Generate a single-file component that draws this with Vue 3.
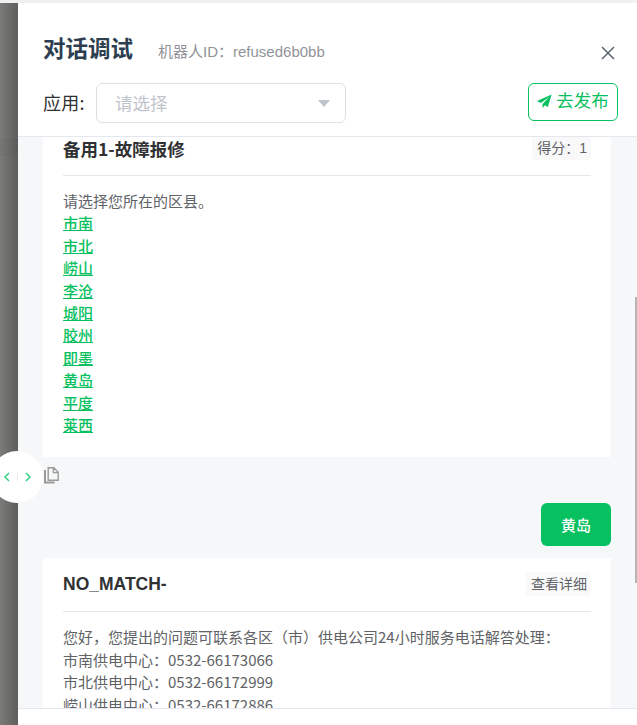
<script setup>
const districts = ['市南', '市北', '崂山', '李沧', '城阳', '胶州', '即墨', '黄岛', '平度', '莱西']
const phones = [
  ['市南', '66173066'],
  ['市北', '66172999'],
  ['崂山', '66172886']
]
</script>

<template>
  <div class="page">
    <div class="handle">
      <svg class="chev" viewBox="0 0 6 10" width="6" height="10"><path d="M5 1 1 5l4 4" /></svg>
      <span class="handle-sep"></span>
      <svg class="chev" viewBox="0 0 6 10" width="6" height="10"><path d="M1 1l4 4-4 4" /></svg>
    </div>
    <section class="drawer">
      <header class="head">
        <div class="title-row">
          <h1 class="title">对话调试</h1>
          <span class="robot">机器人ID：refused6b0bb</span>
          <svg class="close" viewBox="0 0 14 14" width="14" height="14"><path d="M1 1l12 12M13 1 1 13" /></svg>
        </div>
        <div class="app-row">
          <span class="app-label">应用:</span>
          <div class="select">
            <span>请选择</span>
            <i class="caret"></i>
          </div>
          <button class="publish">
            <svg viewBox="0 0 16 16" width="15" height="15"><path d="M15.6.4 0 7.4l4 2.1L13 3.2 5.9 10.6V15l2.5-3 3.2 1.8z" /></svg>
            去发布
          </button>
        </div>
      </header>
      <div class="scroll">
        <div class="list">
          <article class="card">
            <div class="card-head">
              <h2>备用1-故障报修</h2>
              <span class="tag">得分：1</span>
            </div>
            <div class="card-body">
              <div>请选择您所在的区县。</div>
              <a v-for="d in districts" :key="d" class="link">{{ d }}</a>
            </div>
          </article>
          <div class="tools">
            <svg viewBox="0 0 15 17" width="15" height="17"><path class="back" d="M1 3v12.6h9.6" /><path d="M4.2.8h5.6l4.4 4.4v8.1H4.2z M9.4 1v4.6h4.6" /></svg>
          </div>
          <div class="user-row"><span class="user-msg">黄岛</span></div>
          <article class="card">
            <div class="card-head">
              <h2 class="latin">NO_MATCH-</h2>
              <span class="tag">查看详细</span>
            </div>
            <div class="card-body">
              <div>您好，您提出的问题可联系各区（市）供电公司24小时服务电话解答处理：</div>
              <div v-for="p in phones" :key="p[0]">{{ p[0] }}供电中心：0532-{{ p[1] }}</div>
            </div>
          </article>
        </div>
        <span class="scrollbar"></span>
      </div>
      <footer class="foot"></footer>
    </section>
  </div>
</template>

<style scoped>
.page {
  position: relative;
  width: 637px;
  height: 725px;
  padding-top: 3px;
  box-sizing: border-box;
  overflow: hidden;
  background:
    linear-gradient(#f0f0f0 3px, transparent 3px),
    linear-gradient(transparent 139px, rgba(0, 0, 0, .07) 139px, rgba(0, 0, 0, .03) 140px, rgba(0, 0, 0, .03) 156px, transparent 156px),
    linear-gradient(90deg, #7b7c7a 0, #5d5e5c 18px);
  font-family: "Liberation Sans", "Noto Sans CJK SC", sans-serif;
}
.drawer {
  display: flex;
  flex-direction: column;
  height: 722px;
  margin-left: 18px;
  background: #fff;
}
.head {
  flex: none;
  height: 134px;
  box-sizing: border-box;
  padding: 0 19px 0 25px;
  border-bottom: 1px solid #e4e7ed;
}
.title-row {
  display: flex;
  align-items: center;
  height: 64px;
  padding-top: 30px;
  box-sizing: border-box;
}
.title {
  margin: 0 0 6px;
  font-size: 22.5px;
  line-height: 34px;
  font-weight: 700;
  color: #2c3e50;
  font-family: "Noto Sans CJK SC", sans-serif;
}
.robot {
  margin-left: 25px;
  font-size: 15px;
  color: #909399;
}
.close {
  margin: 6px 3px 0 auto;
  fill: none;
  stroke: #5a6472;
  stroke-width: 1.5;
}
.app-row {
  display: flex;
  align-items: flex-start;
  margin-top: 16px;
}
.app-label {
  width: 53px;
  font-size: 18px;
  letter-spacing: .3px;
  line-height: 38px;
  color: #303133;
  font-family: "Noto Sans CJK SC", sans-serif;
}
.select {
  display: flex;
  align-items: center;
  justify-content: space-between;
  width: 250px;
  height: 40px;
  box-sizing: border-box;
  padding: 0 15px 2px 18px;
  border: 1px solid #dcdfe6;
  border-radius: 6px;
  font-size: 17.5px;
  color: #c0c4cc;
  font-family: "Noto Sans CJK SC", sans-serif;
}
.caret {
  width: 0;
  height: 0;
  margin-top: 2px;
  border-left: 6px solid transparent;
  border-right: 6px solid transparent;
  border-top: 7px solid #c0c4cc;
}
.publish {
  display: flex;
  align-items: center;
  justify-content: center;
  gap: 4px;
  width: 90px;
  height: 38px;
  margin-left: auto;
  padding: 0 0 5px;
  background: #fff;
  border: 1px solid #07c160;
  border-radius: 6px;
  color: #07c160;
  font-size: 17.5px;
  font-family: "Noto Sans CJK SC", sans-serif;
}
.publish svg {
  margin-top: 3px;
  fill: #07c160;
}
.scroll {
  position: relative;
  flex: 1;
  min-height: 0;
  overflow: hidden;
  background: #f6f7f9;
}
.list {
  margin-top: -15px;
  padding: 0 26px 0 25px;
}
.card {
  background: #fff;
  padding: 0 20px 21px;
}
.card-head {
  display: flex;
  align-items: center;
  justify-content: space-between;
  height: 54px;
  padding-bottom: 1px;
  box-sizing: border-box;
  border-bottom: 1px solid #e4e7ed;
}
.card-head h2 {
  margin: 0;
  font-size: 17.5px;
  font-weight: 700;
  color: #303133;
  font-family: "Noto Sans CJK SC", sans-serif;
}
.card-head h2.latin {
  font-family: "Liberation Sans", sans-serif;
}
.tag {
  padding: 2px 4px 2px 5px;
  border-radius: 4px;
  background: #f9f9fa;
  font-size: 14px;
  line-height: 20px;
  color: #606266;
}
.card-body {
  padding-top: 14px;
  font-size: 15px;
  line-height: 22.4px;
  color: #606266;
  font-family: "Noto Sans CJK SC", sans-serif;
}
.link {
  display: block;
  width: fit-content;
  font-weight: 500;
  color: #07c160;
  text-decoration: underline;
}
.tools {
  height: 46px;
  padding-top: 10px;
  box-sizing: border-box;
}
.tools svg {
  display: block;
  margin-left: 1px;
  fill: none;
  stroke: #9a9a9a;
  stroke-width: 1.4;
}
.tools .back {
  stroke-width: 2;
}
.user-row {
  display: flex;
  justify-content: flex-end;
  margin-bottom: 12px;
}
.user-msg {
  width: 70px;
  height: 43px;
  border-radius: 6px;
  background: #07c160;
  color: #fff;
  font-size: 15px;
  font-weight: 500;
  line-height: 43px;
  text-align: center;
  font-family: "Noto Sans CJK SC", sans-serif;
}
.scrollbar {
  position: absolute;
  right: 0;
  top: 160px;
  width: 2px;
  height: 286px;
  background: #b5b5b5;
}
.foot {
  flex: none;
  height: 17px;
  box-sizing: border-box;
  border-top: 1px solid #e4e7ed;
  background: #fff;
}
.handle {
  position: absolute;
  z-index: 2;
  left: -9px;
  top: 451px;
  width: 52px;
  height: 52px;
  border-radius: 50%;
  background: #fff;
  display: flex;
  align-items: center;
  justify-content: center;
  gap: 7px;
}
.chev {
  fill: none;
  stroke: #2fd07f;
  stroke-width: 1.5;
}
.handle-sep {
  width: 1px;
  height: 8px;
  background: #e8e8e8;
}
</style>
